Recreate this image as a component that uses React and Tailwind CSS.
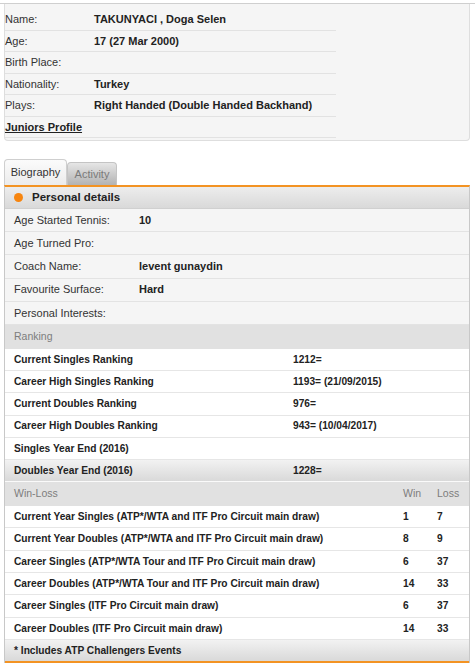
import React from 'react';

const profile = [
  ['Name:', 'TAKUNYACI , Doga Selen'],
  ['Age:', '17 (27 Mar 2000)'],
  ['Birth Place:', ''],
  ['Nationality:', 'Turkey'],
  ['Plays:', 'Right Handed (Double Handed Backhand)'],
];

const personal = [
  ['Age Started Tennis:', '10'],
  ['Age Turned Pro:', ''],
  ['Coach Name:', 'levent gunaydin'],
  ['Favourite Surface:', 'Hard'],
  ['Personal Interests:', ''],
];

const ranking = [
  ['Current Singles Ranking', '1212='],
  ['Career High Singles Ranking', '1193= (21/09/2015)'],
  ['Current Doubles Ranking', '976='],
  ['Career High Doubles Ranking', '943= (10/04/2017)'],
  ['Singles Year End (2016)', ''],
];

const winLoss = [
  ['Current Year Singles (ATP*/WTA and ITF Pro Circuit main draw)', '1', '7'],
  ['Current Year Doubles (ATP*/WTA and ITF Pro Circuit main draw)', '8', '9'],
  ['Career Singles (ATP*/WTA Tour and ITF Pro Circuit main draw)', '6', '37'],
  ['Career Doubles (ATP*/WTA Tour and ITF Pro Circuit main draw)', '14', '33'],
  ['Career Singles (ITF Pro Circuit main draw)', '6', '37'],
  ['Career Doubles (ITF Pro Circuit main draw)', '14', '33'],
];

export default function App() {
  return (
    <div className="w-[475px] h-[663px] bg-white overflow-hidden text-[11px] text-[#222] font-['Liberation_Sans',Arial,sans-serif]">
      {/* player header */}
      <div className="mt-[3px] border-t border-[#cfcfcf]">
        <div className="mx-[4px] w-[466px] h-[137px] bg-[#f5f5f5] border-x border-b border-[#dedede] rounded-b-[4px] pt-[5px]">
          <div className="w-[331px]">
            {profile.map(([k, v]) => (
              <div key={k} className="h-[21.5px] flex items-center border-b border-[#e2e2e2]">
                <div className="w-[89px] text-[#333]">{k}</div>
                <div className="font-bold text-[#222]">{v}</div>
              </div>
            ))}
            <div className="h-[21.5px] flex items-center border-b border-[#e2e2e2]">
              <span className="font-bold underline text-[#222]">Juniors Profile</span>
            </div>
          </div>
        </div>
      </div>

      {/* tabs */}
      <div className="mt-[18px] ml-[4px] flex items-end h-[26px]">
        <div className="w-[63px] h-[26px] border border-b-0 border-[#cfcfcf] rounded-t-[4px] bg-gradient-to-b from-[#fbfbfb] to-[#ececec] flex items-center justify-center text-[11px] text-[#333]">Biography</div>
        <div className="w-[50px] h-[23px] border border-b-0 border-[#c4c4c4] rounded-t-[4px] bg-gradient-to-b from-[#e6e6e6] to-[#b3b3b3] flex items-center justify-center text-[11px] text-[#7a7a7a]">Activity</div>
      </div>

      {/* panel */}
      <div className="ml-[4px] w-[466px] border-x border-[#c8c8c8] border-t-2 border-t-[#f39323]">
        <div className="h-[22px] flex items-center gap-[9px] pl-[9px] bg-gradient-to-b from-[#ededed] to-[#d9d9d9] border-b border-[#d0d0d0]">
          <span className="w-[9px] h-[9px] rounded-full bg-[#f7850f]" />
          <span className="font-bold text-[11.5px] text-[#222]">Personal details</span>
        </div>
        {personal.map(([k, v]) => (
          <div key={k} className="h-[23.2px] flex items-center pl-[9px] bg-[#f5f5f5] border-b border-[#e3e3e3]">
            <div className="w-[125px] text-[#333]">{k}</div>
            <div className="font-bold">{v}</div>
          </div>
        ))}

        <div className="h-[24px] flex items-center pl-[9px] bg-[#e1e1e1] text-[#7d7d7d] text-[10.5px]">Ranking</div>
        {ranking.map(([k, v]) => (
          <div key={k} className="h-[22.2px] flex items-center pl-[9px] bg-white border-b border-[#e6e6e6] font-bold text-[10.2px]">
            <div className="w-[279px]">{k}</div>
            <div>{v}</div>
          </div>
        ))}
        <div className="h-[22px] flex items-center pl-[9px] bg-gradient-to-b from-[#f2f2f2] to-[#d9d9d9] border-b border-[#fafafa] font-bold text-[10.2px]">
          <div className="w-[279px]">Doubles Year End (2016)</div>
          <div>1228=</div>
        </div>

        <div className="h-[24px] flex items-center pl-[9px] bg-[#e1e1e1] text-[#7d7d7d] text-[10.5px]">
          <div className="w-[389px]">Win-Loss</div>
          <div className="w-[34px]">Win</div>
          <div>Loss</div>
        </div>
        {winLoss.map(([k, w, l]) => (
          <div key={k} className="h-[22.35px] flex items-center pl-[9px] bg-white border-b border-[#e6e6e6] font-bold text-[10.2px]">
            <div className="w-[389px]">{k}</div>
            <div className="w-[34px]">{w}</div>
            <div>{l}</div>
          </div>
        ))}
        <div className="h-[21px] flex items-center pl-[9px] bg-gradient-to-b from-[#f2f2f2] to-[#d9d9d9] font-bold text-[10.2px]">
          * Includes ATP Challengers Events
        </div>
        <div className="h-[2px] bg-[#f39323]" />
      </div>
    </div>
  );
}
